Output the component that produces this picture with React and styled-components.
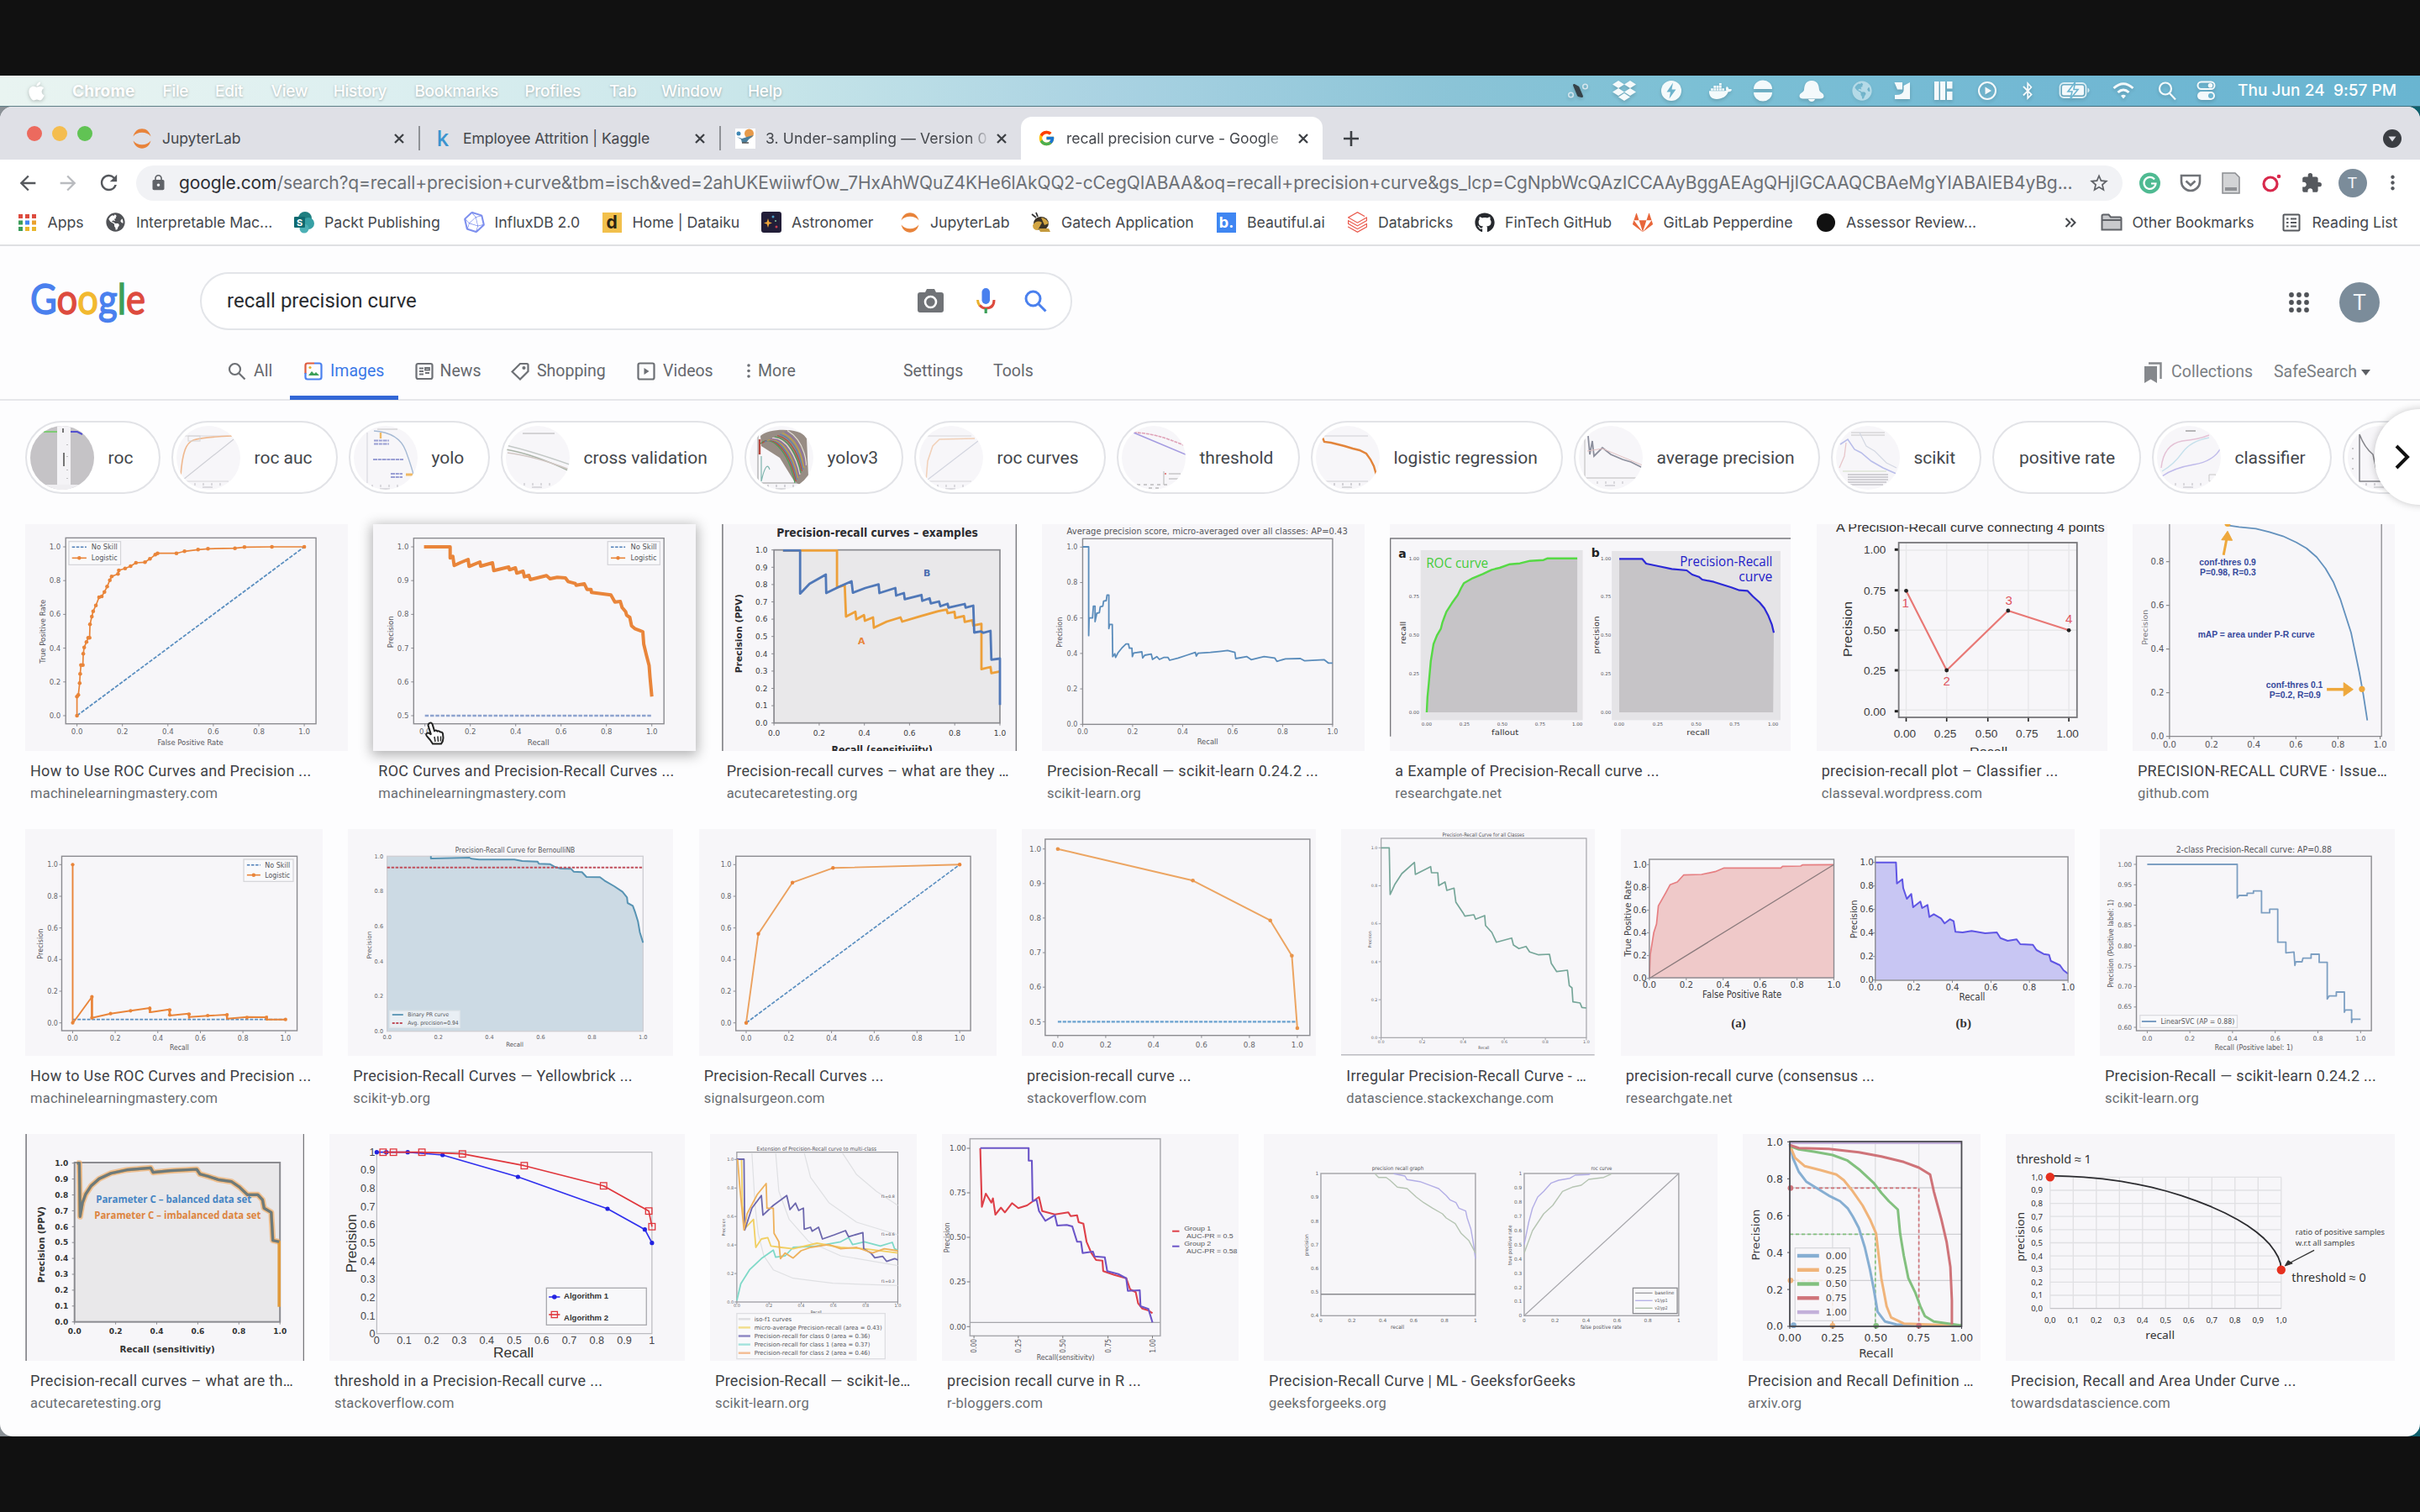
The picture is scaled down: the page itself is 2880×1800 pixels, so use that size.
import React, { createContext, useContext } from "react";
import styled, { createGlobalStyle } from "styled-components";
import { FaApple, FaDropbox, FaDocker, FaBluetoothB, FaGithub, FaGitlab, FaGlobeAmericas } from "react-icons/fa";
import { FcGoogle } from "react-icons/fc";
import { SiInfluxdb, SiDatabricks } from "react-icons/si";
import { MdLock, MdArrowBack, MdArrowForward, MdRefresh, MdStarBorder, MdMoreVert, MdExtension } from "react-icons/md";

const UI = `Inter, "Liberation Sans", sans-serif`;
const ROBOTO = `Roboto, "Liberation Sans", sans-serif`;
const PLOT = `"DejaVu Sans", sans-serif`;

const Global = createGlobalStyle`
  * { box-sizing: border-box; }
  html, body { margin: 0; padding: 0; background: #111; }
  body { width: 2880px; height: 1800px; overflow: hidden; }
  svg { display: block; flex: none; }
`;

/* ---------- shell ---------- */
const Screen = styled.div`
  width: 2880px; height: 1800px; background: #111; padding: 90px 0;
  display: flex; flex-direction: column; font-family: ${UI};
`;
const Desktop = styled.div`
  height: 1620px; display: flex; flex-direction: column;
  background: linear-gradient(90deg, #8b9196 0, #6b9aa8 50%, #0e5f6c 100%);
`;
const MenuBar = styled.div`
  height: 37px; flex: none; display: flex; align-items: center; padding: 0 28px 0 31px; color: #fff;
  border-bottom: 1px solid rgba(50, 90, 100, 0.75);
  background: linear-gradient(90deg, #e9f4f1 0, #dceff0 16%, #c7e5e9 32%, #a9d2e2 46%, #8bc4d7 60%, #7cc0d5 70%, #72b8d3 85%, #69b5d1 100%);
`;
const AppleSlot = styled.div` width: 55px; filter: drop-shadow(0 1px 2px rgba(0,0,0,.25)); `;
const MenuItem = styled.div`
  width: ${(p) => p.$w}px; font-size: 19px; letter-spacing: ${(p) => (p.$bold ? 0.15 : -0.3)}px; white-space: nowrap;
  font-weight: ${(p) => (p.$bold ? 700 : 500)}; text-shadow: 0 1px 3px rgba(0, 0, 0, 0.28);
`;
const StatusArea = styled.div` margin-left: auto; display: flex; align-items: center; `;
const StatusIcon = styled.div`
  width: ${(p) => p.$w || 26}px; margin-left: ${(p) => p.$m}px; display: flex; justify-content: center;
  opacity: ${(p) => p.$o || 0.92}; filter: drop-shadow(0 2px 2px rgba(0,0,0,.18));
`;
const Clock = styled.div`
  width: 190px; margin: -2px -1px 0 24px; font-size: 19px; font-weight: 500; letter-spacing: 0.06px; white-space: pre; 
`;
const Window = styled.div`
  flex: 1; min-height: 0; border-radius: 15px; overflow: hidden; background: #fdfdfe; display: flex; flex-direction: column;
`;

/* ---------- tab strip ---------- */
const TabStrip = styled.div` height: 63px; flex: none; background: #dfe0e6; display: flex; align-items: flex-end; `;
const Lights = styled.div` display: flex; gap: 12px; padding: 0 0 22px 31.5px; width: 143px; `;
const Light = styled.div` width: 18px; height: 18px; border-radius: 50%; background: ${(p) => p.$c}; `;
const Tab = styled.div`
  width: ${(p) => p.$w}px; height: 51px; display: flex; align-items: center; flex: none;
  padding: 0 ${(p) => p.$pr || 14}px 0 ${(p) => p.$pl || 14}px; color: #45484d; font-size: 17.6px;
  border-radius: ${(p) => (p.$active ? "13px 13px 0 0" : 0)}; background: ${(p) => (p.$active ? "#fff" : "transparent")};
`;
const TabIcon = styled.div` width: 24px; height: 24px; display: flex; align-items: center; justify-content: center; flex: none; margin-right: 12px; `;
const TabTitle = styled.div`
  flex: 1; min-width: 0; white-space: nowrap; letter-spacing: ${(p) => p.$ls ?? -0.1}px;
  ${(p) => p.$fade && `mask-image: linear-gradient(90deg, #000 ${p.$fade}px, rgba(0,0,0,.15) ${p.$fade + 22}px);`}
`;
const TabRule = styled.div` width: 2px; height: 29px; background: #8f9196; align-self: center; flex: none; margin-top: 12px; `;
const NewTab = styled.div` width: 68px; height: 51px; display: flex; align-items: center; justify-content: center; `;
const TabMenu = styled.div` margin: 0 22px 14px auto; `;

/* ---------- toolbar ---------- */
const Toolbar = styled.div` height: 55px; flex: none; display: flex; align-items: center; background: #fff; padding-left: 9px; `;
const NavButton = styled.div` width: 48px; display: flex; justify-content: center; color: ${(p) => p.$c || "#55585d"}; `;
const UrlBar = styled.div`
  width: 2364px; height: 42px; margin-left: 9px; border-radius: 21px; background: #f1f2f5; display: flex; align-items: center;
  padding: 0 15px 0 16px; color: #6c7075;
`;
const Url = styled.div`
  width: 2274px; margin-left: 14px; font-size: 21px; letter-spacing: -0.09px; white-space: nowrap;
  b { font-weight: 400; color: #2c2e33; }
`;
const Ext = styled.div` width: 48.2px; display: flex; justify-content: center; `;
const Extensions = styled.div` display: flex; align-items: center; margin-left: 8.5px; `;
const Avatar = styled.div`
  width: ${(p) => p.$d}px; height: ${(p) => p.$d}px; border-radius: 50%; background: #7b8c9a; color: #f3f6f8; flex: none;
  display: flex; align-items: center; justify-content: center; font: 400 ${(p) => p.$f}px ${ROBOTO};
`;
const Bookmarks = styled.div`
  height: 48px; flex: none; border-bottom: 2px solid #dfe0e3; background: #fff; display: flex; align-items: center;
  padding: 0 20px 7px 20px; font-size: 17.7px; color: #45484d; white-space: nowrap;
`;
const Bookmark = styled.div` width: ${(p) => p.$w}px; padding-left: ${(p) => p.$pl || 0}px; display: flex; align-items: center; letter-spacing: -0.04px; flex: none; `;
const BmIcon = styled.div` width: 24px; height: 24px; margin-right: 12.5px; display: flex; align-items: center; justify-content: center; flex: none; `;
const BmRule = styled.div` width: 2px; height: 24px; background: #d2d4d8; `;
const SquareIcon = styled.div`
  width: 23px; height: 24px; background: ${(p) => p.$bg}; color: ${(p) => p.$c}; border-radius: ${(p) => p.$r || 0}px;
  font: ${(p) => p.$wt || 700} ${(p) => p.$f || 20}px/23px ${UI}; text-align: center;
`;

/* ---------- google page ---------- */
const Page = styled.div` flex: 1; min-height: 0; display: flex; flex-direction: column; font-family: ${ROBOTO}; `;
const SearchRow = styled.div` height: 130px; flex: none; display: flex; align-items: center; padding: 0 48px 0 34px; `;
const Logo = styled.svg` overflow: visible; `;
const SearchBox = styled.div`
  width: 1038px; height: 69px; margin-left: 62px; border: 2px solid #e3e5e9; border-radius: 35px; background: #fff;
  display: flex; align-items: center; padding: 0 28px 0 30px; font-size: 24px; color: #2a2c30;
`;
const Query = styled.div` flex: 1; `;
const SearchIcons = styled.div` display: flex; align-items: center; & > svg + svg { margin-left: 33px; } & > svg + svg + svg { margin-left: 29px; } `;
const Account = styled.div` margin-left: auto; display: flex; align-items: center; gap: 36px; padding-top: 4px; `;
const NavRow = styled.div`
  height: 54px; flex: none; border-bottom: 2px solid #e6e7ea; display: flex; padding: 0 59px 0 256px;
  font-size: 19.5px; line-height: 38px; color: #66696e; white-space: nowrap;
`;
const NavTab = styled.div`
  width: ${(p) => p.$w}px; height: 53px; padding-left: ${(p) => p.$pl ?? 15}px; display: flex; gap: ${(p) => p.$g || 9}px;
  color: ${(p) => (p.$on ? "#3b78e7" : "inherit")}; border-bottom: ${(p) => (p.$on ? "5px solid #3367d6" : "0")};
  & > svg { margin-top: 8px; }
`;
const NavTools = styled.div` margin-left: auto; display: flex; color: #7b7f84; padding-top: 1px; & > svg { margin: 7px 10px 0 0; } `;
const SafeSearch = styled.div` margin-left: 25px; display: flex; align-items: center; gap: 5px; height: 38px; `;
const ChipRow = styled.div` height: 147px; flex: none; padding: 24px 0 0 30px; display: flex; position: relative; `;
const Chip = styled.div`
  width: ${(p) => p.$w}px; height: 87px; flex: none; margin-right: 13px; border: 2px solid #e2e3e7; border-radius: 44px; background: #fff;
  display: flex; align-items: center; font-size: 21px; color: #44474c; padding-left: ${(p) => (p.$plain ? 30 : 3.5)}px; white-space: nowrap;
`;
const ChipThumb = styled.div`
  width: 76px; height: 76px; border-radius: 50%; overflow: hidden; background: #f7f6f9; margin-right: 17px; flex: none;
  & > svg { opacity: ${(p) => (p.$strong ? 1 : 0.78)}; }
`;
const NextButton = styled.div`
  position: absolute; right: -54px; top: 10px; width: 108px; height: 114px; border-radius: 57px; background: #fff; box-shadow: 0 0 10px rgba(0, 0, 0, 0.22);
  display: flex; align-items: center; padding-left: 23px;
`;
const ResultRow = styled.div` height: 363px; flex: none; padding: 0 30px; display: flex; justify-content: space-between; `;
const Result = styled.div` width: ${(p) => p.$w}px; `;
const Thumb = styled.div`
  height: 270px; background: #f7f6f9; overflow: hidden; position: relative;
  box-shadow: ${(p) => (p.$hover ? "0 3px 14px 2px rgba(0,0,0,.3)" : "none")};
`;
const Title = styled.div` margin: 10px 0 0 6px; font-size: 18px; line-height: 27px; letter-spacing: 0.28px; color: #3f4246; white-space: nowrap; `;
const Source = styled.div` margin: 1.5px 0 0 6px; font-size: 16.5px; line-height: 24px; letter-spacing: 0.22px; color: #6a6d72; white-space: nowrap; `;
const Pointer = styled.svg` position: absolute; left: 59px; top: 235px; `;

/* ---------- plot primitives ----------
   Figures are described on a stretched artboard, three units per pixel
   vertically and 1568 units across the given width. */
const Board = createContext(null);
const board = (x, y, w) => ({ X: (v) => x + (v * w) / 1568, Y: (v) => y + v / 3, k: w / 1568 });
const useBoard = () => useContext(Board);
const conv = (b, d) => d.split(" ").map((p) => { const [x, y] = p.split(",").map(Number); return `${b.X(x).toFixed(1)},${b.Y(y).toFixed(1)}`; }).join(" ");

function L({ d, c = "#777", w = 1.3, dash, fill = "none", o }) {
  const b = useBoard();
  return <polyline points={conv(b, d)} fill={fill} stroke={c} strokeWidth={w} strokeDasharray={dash} strokeLinejoin="round" opacity={o} />;
}
function Dots({ d, r = 2, c, sq, fill }) {
  const b = useBoard();
  return conv(b, d).split(" ").map((p, i) => {
    const [x, y] = p.split(",").map(Number);
    return sq
      ? <rect key={i} x={x - r} y={y - r} width={r * 2} height={r * 2} fill={fill || "none"} stroke={c} strokeWidth="1.3" />
      : <circle key={i} cx={x} cy={y} r={r} fill={c} />;
  });
}
function R({ x, y, x2, y2, c = "#8b8b90", w = 1.3, fill = "none", o }) {
  const b = useBoard();
  return <rect x={b.X(x)} y={b.Y(y)} width={b.X(x2) - b.X(x)} height={b.Y(y2) - b.Y(y)} fill={fill} stroke={c} strokeWidth={w} opacity={o} />;
}
function T({ x, y, s = 9, to, a = "middle", c = "#55555a", b: bold, rot, len, f = PLOT, children }) {
  const bd = useBoard();
  const X = bd.X(x), Y = bd.Y(y);
  const fit = to != null ? (to - x) * bd.k : len;
  return (
    <text x={X} y={Y + s * 0.36} fontSize={s} fill={c} fontFamily={f} fontWeight={bold ? 700 : 400}
      textAnchor={to != null ? "start" : a} textLength={fit} lengthAdjust={fit ? "spacingAndGlyphs" : undefined}
      transform={rot ? `rotate(-90 ${X} ${Y})` : undefined}>{children}</text>
  );
}
const D6 = ["0.0", "0.2", "0.4", "0.6", "0.8", "1.0"];
const spread = (a, z, n) => Array.from({ length: n }, (_, i) => a + ((z - a) * i) / (n - 1));
function Axes({ box, xt, yt, xl = D6, yl = D6, xy, yx, s = 8.6, c = "#66666b", frame = "#8b8b90", fill, fw = 1.4, f = PLOT, bold, tick = true, rotX }) {
  const [x, y, x2, y2] = box;
  const b = useBoard();
  const xs = spread(xt[0], xt[1], xl.length), ys = spread(yt[0], yt[1], yl.length);
  const t = 3 / b.k;
  return (
    <g>
      <R x={x} y={y} x2={x2} y2={y2} c={frame} w={fw} fill={fill} />
      {xs.map((v, i) => <g key={i}>{tick && <L d={`${v},${y2} ${v},${y2 + 9}`} c={frame} w={1} />}<T x={v} y={xy} s={s} c={c} f={f} b={bold} rot={rotX}>{xl[i]}</T></g>)}
      {ys.map((v, i) => <g key={i}>{tick && <L d={`${x - t},${v} ${x},${v}`} c={frame} w={1} />}<T x={yx} y={v} s={s} c={c} f={f} b={bold} a="end">{yl[i]}</T></g>)}
    </g>
  );
}
function Figure({ on, x, y, w, children }) {
  return (
    <Board.Provider value={on}>
      <svg width={w} height="270" viewBox={`${x} ${y} ${w} 270`}>{children}</svg>
    </Board.Provider>
  );
}

const BLUE = "#5b8fc0", ORANGE = "#e9853a";
const B1 = board(0, 600, 840), B2 = board(840, 600, 800), B3 = board(1620, 600, 1260);
const B4 = board(0, 970, 1200), B5 = board(1200, 970, 1680);
const B6 = board(0, 1335, 1480), B7 = board(1480, 1335, 1400);

function SkillLegend({ x, y, x2, y2, lx, tx, te, rows, s = 8.4 }) {
  return (
    <g>
      <R x={x} y={y} x2={x2} y2={y2} c="#d4d4d8" w={1.2} fill="#f9f9fb" />
      <L d={`${lx[0]},${rows[0]} ${lx[1]},${rows[0]}`} c="#4f7fb8" w={1.6} dash="3.5 1.6" />
      <L d={`${lx[0]},${rows[1]} ${lx[1]},${rows[1]}`} c={ORANGE} w={1.6} />
      <Dots d={`${(lx[0] + lx[1]) / 2},${rows[1]}`} c={ORANGE} r={2.2} />
      <T x={tx} y={rows[0]} to={te} s={s}>No Skill</T>
      <T x={tx} y={rows[1]} to={te} s={s}>Logistic</T>
    </g>
  );
}

const rocLine = "171,756 171,688 174,682 177,640 178,607 180,575 184,575 185,535 187,512 192,493 196,478 199,478 200,430 204,402 207,383 213,362 220,333 226,330 232,314 238,295 244,272 248,259 262,250 264,237 278,230 290,222 302,210 322,208 333,196 345,181 350,176 392,176 410,169 440,163 462,160 522,158 543,154 604,153 676,153";
const prLine = "942,153 1000,153 1000,193 1006,187 1009,220 1022,210 1040,198 1042,223 1066,207 1068,222 1094,210 1097,238 1130,225 1132,235 1145,228 1148,247 1162,240 1165,260 1175,255 1178,270 1214,256 1222,267 1238,262 1256,264 1262,277 1278,284 1280,290 1298,285 1304,305 1313,305 1314,316 1357,325 1366,350 1378,348 1382,370 1390,385 1392,397 1399,405 1403,435 1410,445 1428,456 1430,500 1436,540 1442,577 1444,620 1448,688";

const FigRoc = () => (
  <Figure on={B1} x={30} y={624} w={384}>
    <Axes box={[146, 121, 702, 785]} xt={[171, 676]} yt={[756, 153]} xy={814} yx={135} />
    <L d="171,756 676,153" c={BLUE} w={1.8} dash="4.5 1.8" />
    <L d={rocLine} c={ORANGE} w={1.7} />
    <Dots d={rocLine} c={ORANGE} r={2.3} />
    <SkillLegend x={153} y={134} x2={268} y2={217} lx={[160, 192]} tx={203} te={261} rows={[154, 193]} />
    <T x={350} y={850} to={496}>False Positive Rate</T>
    <T x={94} y={455} rot len={76}>True Positive Rate</T>
  </Figure>
);
const FigPr = () => (
  <Figure on={B1} x={444} y={624} w={384}>
    <Axes box={[919, 122, 1475, 785]} xt={[944, 1448]} yt={[756, 153]} yl={["0.5", "0.6", "0.7", "0.8", "0.9", "1.0"]} xy={814} yx={908} />
    <L d="944,756 1448,756" c="#8ea3cf" w={2.4} dash="4.5 1.8" />
    <L d={prLine} c={ORANGE} w={4} />
    <SkillLegend x={1350} y={134} x2={1466} y2={217} lx={[1357, 1389]} tx={1401} te={1459} rows={[154, 193]} />
    <T x={1172} y={850} to={1220}>Recall</T>
    <T x={868} y={457} rot len={38}>Precision</T>
  </Figure>
);
const TENTHS = ["0.0", "0.1", "0.2", "0.3", "0.4", "0.5", "0.6", "0.7", "0.8", "0.9", "1.0"];
const FigExamples = () => (
  <Figure on={B2} x={858} y={624} w={351}>
    <L d="37,60 37,900" c="#77777c" w={1.5} /><L d="722,60 722,900" c="#77777c" w={1.5} />
    <T x={163} y={101} to={633} s={13.5} b c="#2c2c30">Precision-recall curves – examples</T>
    <Axes box={[157, 164, 684, 782]} xt={[157, 684]} yt={[782, 164]} yl={TENTHS} xy={817} yx={142} s={9} c="#3c3c40" fill="#e9e8ea" fw={1.7} />
    <L d="178,166 304,166 304,298 322,290 325,402 347,385 349,412 367,397 369,417 388,405 390,442 420,420 452,405 456,420 500,400 540,383 560,377 562,390 578,385 580,407 600,400 602,421 620,415 622,434 641,428 641,590 662,582 664,604 684,598" c="#eda03a" w={2.8} />
    <L d="178,166 218,166 218,320 240,285 278,252 279,318 310,295 338,276 341,317 370,300 401,287 403,318 440,300 442,327 460,318 462,340 501,325 503,346 520,337 523,355 542,348 545,365 562,356 564,370 602,357 604,370 622,363 624,459 640,455 645,460 662,453 664,556 684,552 684,718" c="#5078b8" w={2.8} />
    <T x={514} y={246} s={11} b c="#4a6db0">B</T>
    <T x={361} y={490} s={11} b c="#e8843a">A</T>
    <T x={291} y={878} to={527} s={11.5} b c="#2c2c30">Recall (sensitiviity)</T>
    <T x={75} y={463} rot len={94} s={10.5} b c="#2c2c30">Precision (PPV)</T>
  </Figure>
);
const FigAverage = () => (
  <Figure on={B2} x={1239} y={624} w={384}>
    <T x={840} y={97} to={1495} s={9.8}>Average precision score, micro-averaged over all classes: AP=0.43</T>
    <Axes box={[877, 124, 1460, 787]} xt={[877, 1460]} yt={[787, 154]} xy={814} yx={865} s={8} />
    <L d="877,153 891,153 891,470 892,407 900,407 902,365 906,365 906,420 910,390 916,388 918,367 924,365 926,347 932,345 934,325 938,325 938,445 940,430 946,430 947,545 952,535 954,548 960,530 968,515 978,500 984,500 986,515 992,515 993,545 996,532 1015,528 1017,550 1022,540 1037,536 1040,555 1050,545 1056,555 1066,548 1076,548 1080,558 1100,550 1120,540 1140,530 1142,543 1146,533 1175,530 1200,526 1215,523 1232,530 1234,552 1260,545 1270,556 1300,545 1325,550 1330,562 1350,553 1385,552 1395,560 1440,556 1450,568 1460,568" c="#5a8cbb" w={1.8} />
    <T x={1144} y={849} to={1193} s={8.6}>Recall</T>
    <T x={823} y={458} rot len={36}>Precision</T>
  </Figure>
);
const Q5 = ["0.00", "0.25", "0.50", "0.75", "1.00"];
const FigTwoPanel = () => (
  <Figure on={B3} x={1654} y={624} w={477}>
    <L d="43,830 43,123 640,123" c="#77777b" w={1.5} />
    <R x={88} y={165} x2={328} y2={772} c="none" fill="#e5e4e7" />
    <R x={371} y={168} x2={621} y2={772} c="none" fill="#e5e4e7" />
    <L d="97,744 98,690 100,640 103,560 107,500 112,470 118,445 120,425 123,405 126,385 134,355 143,325 148,300 152,283 165,265 180,250 193,235 205,228 220,215 235,212 250,203 270,200 276,194 320,194 320,744" c="none" fill="#c6c4c7" />
    <L d="382,196 416,196 422,213 440,222 460,232 482,237 490,252 500,260 505,270 522,278 535,288 548,298 560,308 572,310 580,330 590,352 597,372 603,400 608,430 611,460 610,744 382,744" c="none" fill="#c6c4c7" />
    <L d="97,744 98,690 100,640 103,560 107,500 112,470 118,445 120,425 123,405 126,385 134,355 143,325 148,300 152,283 165,265 180,250 193,235 205,228 220,215 235,212 250,203 270,200 276,194 320,194" c="#56d945" w={2.4} />
    <L d="382,196 416,196 422,213 440,222 460,232 482,237 490,252 500,260 505,270 522,278 535,288 548,298 560,308 572,310 580,330 590,352 597,372 603,400 608,430 611,460" c="#2c29d6" w={2.2} />
    <T x={61} y={177} s={14} b c="#222">a</T><T x={347} y={175} s={14} b c="#222">b</T>
    <T x={96} y={211} to={188} s={15.5} c="#46cc3c" f={'"Open Sans", sans-serif'}>ROC curve</T>
    <T x={472} y={205} to={609} s={15.5} c="#2320c8" f={'"Open Sans", sans-serif'}>Precision-Recall</T>
    <T x={559} y={260} to={609} s={15.5} c="#2320c8" f={'"Open Sans", sans-serif'}>curve</T>
    {[97, 153, 209, 265, 320].map((x, i) => <T key={i} x={x} y={785} s={5.5}>{Q5[i]}</T>)}
    {[382, 439, 496, 553, 610].map((x, i) => <T key={i} x={x} y={785} s={5.5}>{Q5[i]}</T>)}
    {[744, 606, 469, 331, 194].map((y, i) => <T key={i} x={86} y={y} s={5.5} a="end">{Q5[i]}</T>)}
    {[744, 606, 469, 331, 196].map((y, i) => <T key={i} x={370} y={y} s={5.5} a="end">{Q5[i]}</T>)}
    <T x={193} y={816} to={233} s={9.5} c="#333">fallout</T><T x={482} y={816} to={516} s={9.5} c="#333">recall</T>
    <T x={62} y={460} rot len={27} s={9} c="#333">recall</T><T x={348} y={468} rot len={45} s={9.5} c="#333">precision</T>
  </Figure>
);
const SANS = `"Liberation Sans", sans-serif`;
const FigFourPoints = () => (
  <Figure on={B3} x={2162} y={624} w={346}>
    <T x={703} y={82} to={1101} s={15.5} c="#333" f={SANS}>A Precision-Recall curve connecting 4 points</T>
    {[807, 867, 928, 988, 1048].map((v) => <L key={v} d={`${v},138 ${v},762`} c="#e8e8ea" w={1.4} />)}
    {[165, 309, 451, 594, 736].map((v) => <L key={v} d={`796,${v} 1060,${v}`} c="#e8e8ea" w={1.4} />)}
    <R x={796} y={138} x2={1060} y2={762} c="#77777b" w={1.8} />
    {[807, 867, 928, 988, 1048].map((v, i) => <g key={v}><L d={`${v},764 ${v},777`} c="#222" w={1.6} /><T x={v - 2} y={820} s={13.6} c="#3c3c40" f={SANS}>{Q5[i]}</T></g>)}
    {[740, 594, 451, 308, 163].map((v, i) => <g key={v}><L d={`790,${v} 795,${v}`} c="#222" w={3} /><T x={777} y={v} s={13.6} a="end" c="#3c3c40" f={SANS}>{Q5[i]}</T></g>)}
    <L d="807,310 867,594 958,381 1048,451" c="#e87875" w={2.2} />
    <Dots d="807,310 867,594 958,381 1048,451" c="#222" r={2.4} />
    <T x={806} y={352} s={15} c="#df5560" f={SANS}>1</T><T x={867} y={631} s={15} c="#df5560" f={SANS}>2</T>
    <T x={959} y={345} s={15} c="#df5560" f={SANS}>3</T><T x={1048} y={411} s={15} c="#df5560" f={SANS}>4</T>
    <T x={720} y={447} rot len={66} s={15.5} c="#333" f={SANS}>Precision</T>
    <T x={901} y={884} to={957} s={14.5} c="#333" f={SANS}>Recall</T>
  </Figure>
);
const NAVY = "#36499c", AMBER = "#eea83c";
const FigConf = () => (
  <Figure on={B3} x={2538} y={624} w={312}>
    <L d="1197,60 1197,830 1511,830 1511,60" c="#8b8b90" w={1.3} />
    {spread(1197, 1509, 6).map((v, i) => <g key={i}><L d={`${v},830 ${v},840`} w={1} /><T x={v} y={859} s={10}>{D6[i]}</T></g>)}
    {spread(830, 206, 5).map((v, i) => <g key={i}><L d={`1192,${v} 1197,${v}`} w={1} /><T x={1189} y={v} s={10} a="end">{D6[i]}</T></g>)}
    <L d="1283,76 1300,82 1325,88 1345,100 1365,115 1385,137 1400,158 1415,190 1428,230 1440,280 1450,340 1458,400 1466,460 1472,530 1478,600 1484,680 1490,773" c="#6391bd" w={1.8} />
    <Dots d="1283,70 1482,661" c={AMBER} r={3.6} />
    <L d="1277,182 1282,120" c={AMBER} w={3} /><L d="1274,128 1283,97 1290,130 1274,128" c={AMBER} w={1} fill={AMBER} />
    <L d="1430,662 1460,662" c={AMBER} w={3.5} /><L d="1455,638 1469,662 1455,686 1455,638" c={AMBER} w={1} fill={AMBER} />
    <T x={1241} y={208} to={1325} s={10} b c={NAVY} f={SANS}>conf-thres 0.9</T>
    <T x={1242} y={245} to={1325} s={10} b c={NAVY} f={SANS}>P=0.98, R=0.3</T>
    <T x={1239} y={466} to={1412} s={10} b c={NAVY} f={SANS}>mAP = area under P-R curve</T>
    <T x={1340} y={645} to={1424} s={10} b c={NAVY} f={SANS}>conf-thres 0.1</T>
    <T x={1345} y={682} to={1421} s={10} b c={NAVY} f={SANS}>P=0.2, R=0.9</T>
    <T x={1160} y={440} rot len={42} s={9.5} c="#77777b">Precision</T>
  </Figure>
);
const FigSpike = () => (
  <Figure on={B4} x={30} y={987} w={354}>
    <Axes box={[96, 148, 462, 771]} xt={[113, 444]} yt={[743, 178]} xy={798} yx={90} s={8} />
    <L d="113,731 444,731" c={BLUE} w={1.8} dash="4 1.7" />
    <L d="113,178 113,745 143,650 143,725 172,710 203,700 233,690 234,705 263,695 264,717 293,710 294,722 323,718 352,714 353,728 384,722 414,723 415,731 444,731" c={ORANGE} w={1.9} />
    <Dots d="113,178 113,743 143,650 143,725 172,710 203,700 233,692 264,697 264,715 294,712 323,717 353,714 384,724 414,724 444,731" c={ORANGE} r={2.1} />
    <L d="143,645 143,730" c={ORANGE} w={2.6} /><L d="233,685 233,708" c={ORANGE} w={2.4} /><L d="264,693 264,718" c={ORANGE} w={2.4} /><L d="294,708 294,728" c={ORANGE} w={2.4} /><L d="353,710 353,730" c={ORANGE} w={2.4} /><L d="415,718 415,735" c={ORANGE} w={2.4} />
    <SkillLegend x={379} y={159} x2={456} y2={238} lx={[384, 405]} tx={412} te={451} rows={[179, 215]} s={8} />
    <T x={264} y={831} to={294} s={8.3}>Recall</T>
    <T x={63} y={461} rot len={36} s={8.4}>Precision</T>
  </Figure>
);
const ybLine = "670,148 670,156 730,153 733,157 745,160 800,160 812,165 836,167 838,175 855,176 862,185 872,192 888,193 892,203 905,205 912,222 933,223 940,235 955,255 968,275 975,295 976,315 984,325 988,350 992,380 995,420 1000,457";
const FigYellowbrick = () => (
  <Figure on={B4} x={414} y={987} w={387}>
    <L d={`602,773 602,148 ${ybLine} 1000,773`} c="none" fill="#ccdae4" />
    <Axes box={[602, 148, 1000, 773]} xt={[602, 1000]} yt={[773, 148]} xy={793} yx={596} s={6.6} frame="#cfcfd4" tick={false} />
    <L d={ybLine} c="#5793b3" w={2} />
    <L d="602,188 1000,188" c="#c0505c" w={1.9} dash="3.4 1.6" />
    <T x={708} y={127} to={894} s={8}>Precision-Recall Curve for BernoulliNB</T>
    <R x={606} y={700} x2={715} y2={760} c="#dfe5ea" fill="#e9eff4" />
    <L d="610,714 627,714" c="#5793b3" w={1.8} /><L d="610,744 627,744" c="#c0505c" w={1.8} dash="3 1.5" />
    <T x={634} y={714} to={698} s={6.6}>Binary PR curve</T>
    <T x={634} y={744} to={713} s={6.6}>Avg. precision=0.94</T>
    <T x={787} y={821} to={814} s={7.4}>Recall</T>
    <T x={574} y={465} rot len={33} s={7.4}>Precision</T>
  </Figure>
);
const FigSurgeon = () => (
  <Figure on={B4} x={831} y={987} w={354}>
    <Axes box={[1143, 148, 1508, 771]} xt={[1159, 1491]} yt={[743, 178]} xy={799} yx={1136} s={8} />
    <L d="1159,743 1491,178" c={BLUE} w={1.7} dash="4.5 1.8" />
    <L d="1159,743 1178,425 1231,242 1294,190 1491,178" c="#eba15f" w={1.9} />
    <Dots d="1159,743 1178,425 1231,242 1294,190 1491,178" c={ORANGE} r={2.2} />
  </Figure>
);
const FigOverflow = () => (
  <Figure on={B5} x={1215} y={987} w={350}>
    <Axes box={[40, 87, 334, 788]} xt={[54, 320]} yt={[739, 122]} yl={["0.5", "0.6", "0.7", "0.8", "0.9", "1.0"]} xy={822} yx={35.5} s={8.8} />
    <L d="54,739 320,739" c="#6ba2cf" w={2.3} dash="4.2 1.6" />
    <L d="54,122 204,235 290,377 314,503 320,762" c="#eca562" w={2} />
    <Dots d="54,122 204,235 290,377 314,503 320,762" c="#e8944a" r={2.3} />
  </Figure>
);
const FigIrregular = () => (
  <Figure on={B5} x={1597} y={987} w={302}>
    <T x={483} y={71} to={574} s={6.4}>Precision-Recall Curve for all Classes</T>
    <Axes box={[415, 84, 643, 796]} xt={[415, 643]} yt={[796, 118]} xy={812} yx={411} s={4.8} frame="#a5a5aa" fw={1.2} />
    <L d="415,118 424,118 425,285 430,250 438,210 452,170 453,213 470,185 471,207 478,207 479,253 486,240 488,270 496,262 498,312 506,350 508,362 518,357 520,373 530,360 531,395 538,420 543,455 560,440 562,465 568,478 576,470 580,490 590,500 602,498 604,530 610,560 622,555 624,610 627,618 628,668 636,672 638,688 643,690" c="#76a699" w={1.7} />
    <L d="370,857 652,857" c="#bdbdc2" w={1.6} />
    <T x={523} y={831} to={535} s={5}>Recall</T><T x={402} y={445} rot len={20} s={5}>Precision</T>
  </Figure>
);
const redArea = "712,584 713,500 717,420 720,390 722,325 730,280 735,250 743,240 750,215 770,213 785,203 795,190 858,190 860,184 880,183 882,179 917,178";
const blueArea = "963,170 986,170 987,245 993,230 994,262 998,300 1003,283 1005,330 1013,310 1015,333 1021,322 1023,365 1028,355 1036,370 1040,388 1046,373 1050,380 1052,418 1060,420 1070,415 1085,423 1098,420 1102,440 1110,450 1120,445 1124,462 1138,464 1142,483 1150,497 1156,500 1158,522 1168,537 1172,555 1177,568";
const SERIF = `"Liberation Serif", serif`;
const FigConsensus = () => (
  <Figure on={B5} x={1929} y={987} w={540}>
    <L d={`${redArea} 917,584`} c="none" fill="#efc9c9" />
    <L d={redArea} c="#e67f82" w={1.7} /><L d="712,584 917,178" c="#8a7a7c" w={1.3} />
    <Axes box={[712, 159, 917, 582]} xt={[712, 917]} yt={[584, 178]} xy={607} yx={709} s={10.2} c="#444448" />
    <L d={`${blueArea} 1177,590 963,590`} c="none" fill="#c8c6f3" />
    <L d={blueArea} c="#5f55e4" w={2} />
    <Axes box={[963, 150, 1177, 591]} xt={[963, 1177]} yt={[590, 170]} xy={615} yx={961} s={10.2} c="#444448" />
    <T x={771} y={641} to={859} s={11.5} c="#3c3c40">False Positive Rate</T>
    <T x={1056} y={652} to={1085} s={11.5} c="#3c3c40">Recall</T>
    <T x={688} y={370} rot len={91} s={11} c="#3c3c40">True Positive Rate</T>
    <T x={939} y={373} rot len={46} s={11} c="#3c3c40">Precision</T>
    <T x={811} y={742} s={15} b c="#333" f={SERIF}>(a)</T><T x={1061} y={742} s={15} b c="#333" f={SERIF}>(b)</T>
  </Figure>
);
const FigTwoClass = () => (
  <Figure on={B5} x={2499} y={987} w={351}>
    <T x={1297} y={125} to={1470} s={9.8}>2-class Precision-Recall curve: AP=0.88</T>
    <Axes box={[1253, 148, 1514, 771]} xt={[1265, 1502]} yt={[759, 177]} xy={798} yx={1248} s={7.6}
      yl={["0.60", "0.65", "0.70", "0.75", "0.80", "0.85", "0.90", "0.95", "1.00"]} />
    <L d="1265,177 1365,177 1365,297 1367,288 1376,288 1376,280 1383,280 1383,272 1392,272 1392,350 1401,350 1401,337 1410,337 1410,455 1419,455 1419,493 1428,490 1429,538 1430,525 1437,525 1438,512 1447,512 1447,498 1456,498 1456,527 1465,527 1465,658 1467,647 1475,647 1475,633 1484,633 1484,705 1485,697 1492,697 1492,742 1493,730 1502,730" c="#7d9fc2" w={1.8} />
    <R x={1257} y={716} x2={1365} y2={760} c="#dcdce0" fill="#f9f9fb" />
    <L d="1259,738 1275,738" c="#6c94bd" w={1.8} /><T x={1280} y={738} to={1362} s={8}>LinearSVC (AP = 0.88)</T>
    <T x={1340} y={832} to={1427} s={8.2}>Recall (Positive label: 1)</T>
    <T x={1225} y={460} rot len={105} s={8}>Precision (Positive label: 1)</T>
  </Figure>
);
const paramC = "97,149 100,149 101,340 104,290 108,260 115,230 125,205 140,185 160,173 190,166 193,182 215,176 248,171 252,188 262,196 275,208 292,215 302,235 312,262 325,262 331,280 333,310 342,325 344,425 352,430";
const FigParameterC = () => (
  <Figure on={B6} x={30} y={1350} w={332}>
    <L d="33,30 33,870" c="#77777c" w={1.5} /><L d="383,30 383,870" c="#77777c" w={1.5} />
    <Axes box={[94, 147, 353, 716]} xt={[94, 353]} yt={[716, 149]} yl={TENTHS} xy={750} yx={86} s={9} c="#333" fill="#e9e8ea" fw={2} bold />
    <L d={paramC} c="#f0b070" w={7} o={0.7} />
    <L d={`${paramC} 352,662`} c="#e09a3c" w={3.6} />
    <L d={paramC} c="#6c7a7c" w={3.2} />
    <T x={121} y={279} to={317} s={12} b c="#4585c4" f={'"Open Sans", sans-serif'}>Parameter C – balanced data set</T>
    <T x={119} y={335} to={329} s={12} b c="#dd8540" f={'"Open Sans", sans-serif'}>Parameter C – imbalanced data set</T>
    <T x={151} y={813} to={271} s={11} b c="#333">Recall (sensitivitiy)</T>
    <T x={52} y={440} rot len={91} s={10} b c="#333">Precision (PPV)</T>
  </Figure>
);
const FigThreshold = () => (
  <Figure on={B6} x={392} y={1350} w={423}>
    <Axes box={[475, 110, 822, 758]} xt={[475, 822]} yt={[758, 108]} xy={781} yx={473} s={12.6} f={SANS} c="#444448" frame="#b5b5ba" fw={1.1} tick={false}
      xl={["0", "0.1", "0.2", "0.3", "0.4", "0.5", "0.6", "0.7", "0.8", "0.9", "1"]} yl={["0", "0.1", "0.2", "0.3", "0.4", "0.5", "0.6", "0.7", "0.8", "0.9", "1"]} />
    <L d="475,110 514,110 558,120 653,198 766,312 813,386 822,434" c="#3030ee" w={1.7} />
    <Dots d="475,110 487,110 514,110 558,120 653,198 766,312 813,386 822,434" c="#2222e0" r={2.6} />
    <L d="483,110 496,110 532,110 583,116 661,158 761,230 818,320 822,376" c="#e0363c" w={1.7} />
    <Dots d="483,110 496,110 532,110 583,116 661,158 761,230 818,320 822,376" c="#e0363c" r={3.8} sq />
    <R x={689} y={595} x2={815} y2={727} c="#a9a9ae" fill="#f8f8fa" />
    <L d="692,627 706,627" c="#3030ee" w={1.6} /><Dots d="699,627" c="#2222e0" r={2.8} />
    <L d="692,690 706,690" c="#e0363c" w={1.6} /><Dots d="699,690" c="#e0363c" r={3.6} sq />
    <T x={711} y={624} to={767} s={9.5} b c="#333" f={SANS}>Algorithm 1</T><T x={711} y={702} to={767} s={9.5} b c="#333" f={SANS}>Algorithm 2</T>
    <T x={622} y={825} to={673} s={17} c="#333" f={SANS}>Recall</T>
    <T x={443} y={436} rot len={70} s={17} c="#333" f={SANS}>Precision</T>
  </Figure>
);
const FigMultiClass = () => (
  <Figure on={B6} x={845} y={1350} w={246}>
    <T x={954} y={97} to={1105} s={6.6}>Extension of Precision-Recall curve to multi-class</T>
    <Axes box={[929, 110, 1132, 645]} xt={[929, 1132]} yt={[645, 136]} xy={659} yx={925} s={5} frame="#96969b" fw={1.2} />
    {["948,112 952,300 956,400 963,480 975,530 1000,560 1050,578 1132,586", "978,112 982,250 995,350 1020,430 1060,480 1132,515", "1014,112 1022,200 1045,290 1080,360 1132,405", "1062,112 1080,190 1105,250 1132,300"].map((d) => <L key={d} d={d} c="#dfe0e3" w={1.2} />)}
    <L d="929,640 934,580 945,530 960,490 975,460 978,485 990,480 1000,450 1030,445 1060,430 1070,415 1075,440 1090,430 1110,445 1125,432 1128,455 1132,460" c="#7fd9c8" w={1.8} />
    <L d="935,135 936,300 940,380 950,350 953,450 960,420 968,415 972,445 985,450 1000,455 1030,435 1060,450 1090,455 1132,470" c="#f1cf62" w={1.8} />
    <L d="929,135 938,135 939,388 948,310 960,265 962,335 975,300 992,265 996,315 1003,292 1007,318 1013,310 1014,385 1022,378 1024,392 1032,378 1037,420 1052,405 1066,390 1070,412 1088,397 1089,455 1098,470 1103,487 1113,482 1118,500 1128,490 1132,495" c="#6c67ad" w={1.8} />
    <L d="930,135 933,240 938,388 942,330 955,260 966,222 967,310 975,310 976,400 982,430 984,490 990,470 1000,488 1010,462 1022,450 1045,440 1060,455 1080,450 1100,470 1115,455 1132,462" c="#eeb15c" w={1.8} />
    {[["f1=0.8", 268], ["f1=0.6", 403], ["f1=0.2", 571]].map(([t, y]) => <T key={t} x={1111} y={y} to={1128} s={4.6}>{t}</T>)}
    <T x={1022} y={680} to={1036} s={5.2}>Recall</T><T x={912} y={378} rot len={21} s={5}>Precision</T>
    <R x={929} y={686} x2={1116} y2={848} c="#dedee2" fill="#f9f9fb" />
    {[["iso-f1 curves", 998, "#dddde0"], ["micro-average Precision-recall (area = 0.43)", 1112, "#f1dd8a"], ["Precision-recall for class 0 (area = 0.36)", 1097, "#8c86c2"], ["Precision-recall for class 1 (area = 0.37)", 1097, "#a2e2dc"], ["Precision-recall for class 2 (area = 0.46)", 1097, "#f3bc92"]].map(([t, e, c], i) => (
      <g key={t}><L d={`931,${706 + i * 30.3} 946,${706 + i * 30.3}`} c={c} w={2.4} /><T x={951} y={706 + i * 30.3} to={e} s={7}>{t}</T></g>
    ))}
  </Figure>
);
const FigR = () => (
  <Figure on={B6} x={1121} y={1350} w={353}>
    <R x={1223} y={62} x2={1463} y2={766} c="#aaaaaf" w={1.5} /><L d="1223,718 1463,718" c="#a5a5aa" w={1.3} />
    {[733, 573, 414, 255, 96].map((v, i) => <g key={v}><L d={`1219,${v} 1223,${v}`} w={1} /><T x={1218} y={v} s={8.8} a="end">{Q5[i]}</T></g>)}
    {[1228, 1284, 1340, 1397, 1453].map((v, i) => <g key={v}><L d={`${v},766 ${v},775`} w={1} /><T x={v} y={802} s={8.6} rot len={17}>{Q5[i]}</T></g>)}
    <L d="1236,96 1238,305 1243,258 1250,290 1252,275 1255,333 1262,308 1267,325 1276,292 1284,310 1295,300 1310,270 1314,320 1330,332 1347,325 1350,338 1358,335 1360,360 1366,365 1370,430 1376,470 1382,495 1390,497 1391,535 1405,548 1420,560 1425,600 1432,610 1435,650 1440,668 1448,675 1453,685" c="#de4049" w={2.1} />
    <L d="1236,95 1297,95 1297,140 1301,140 1302,285 1307,280 1310,320 1318,355 1330,335 1333,372 1345,370 1352,375 1358,430 1363,430 1365,470 1378,465 1380,482 1393,485 1396,535 1410,545 1420,560 1422,605 1437,603 1438,660 1448,670 1453,718" c="#6b55c8" w={2.1} />
    <T x={1307} y={843} to={1380} s={9}>Recall(sensitivity)</T><T x={1194} y={415} rot len={36} s={8.6}>Precision</T>
    <L d="1478,392 1487,392" c="#de4049" w={2} /><L d="1478,446 1487,446" c="#6b55c8" w={2} />
    <T x={1493} y={380} to={1527} s={8} f={SANS}>Group 1</T><T x={1496} y={407} to={1555} s={8} f={SANS}>AUC-PR = 0.5</T>
    <T x={1493} y={434} to={1527} s={8} f={SANS}>Group 2</T><T x={1496} y={463} to={1560} s={8} f={SANS}>AUC-PR = 0.58</T>
  </Figure>
);
const FigGeeks = () => (
  <Figure on={B7} x={1504} y={1350} w={540}>
    <Axes box={[103, 186, 309, 694]} xt={[103, 309]} yt={[694, 186]} xy={710} yx={100} s={5.8} frame="#a3a3a8" xl={["0", "0.2", "0.4", "0.6", "0.8", "1"]} yl={["0.4", "0.5", "0.6", "0.7", "0.8", "0.9", "1"]} tick={false} />
    <L d="103,617 309,617" c="#8a8a8f" w={1.4} />
    <L d="200,187 215,195 218,208 235,215 250,230 260,240 270,265 275,280 283,290 287,310 296,320 298,345 303,385 306,430 309,490" c="#b3aee6" w={1.4} />
    <L d="175,187 180,200 190,200 195,210 205,235 218,240 230,270 240,290 252,310 265,330 270,345 282,365 290,400 300,425 309,470" c="#b6c5b3" w={1.4} />
    <Axes box={[374, 186, 580, 694]} xt={[374, 580]} yt={[694, 186]} xy={710} yx={371} s={5.8} frame="#a3a3a8" xl={["0", "0.2", "0.4", "0.6", "0.8", "1"]} yl={["0", "0.1", "0.2", "0.3", "0.4", "0.5", "0.6", "0.7", "0.8", "0.9", "1"]} tick={false} />
    <L d="374,694 580,186" c="#a6a6ab" w={1.2} />
    <L d="374,440 380,360 385,310 392,270 400,250 410,220 420,210 435,203 442,192 460,190 462,187" c="#b3aee6" w={1.4} />
    <L d="374,470 385,390 400,330 412,300 425,250 438,235 450,228 460,207 480,200 490,188" c="#b6c5b3" w={1.4} />
    <R x={519} y={595} x2={578} y2={686} c="#8b8b90" fill="#f9f9fb" />
    {[["baseline", "#9a9a9f"], ["v1/yp1", "#b3aee6"], ["v2/yp2", "#a9bba6"]].map(([t, c], i) => <g key={t}><L d={`522,${613 + i * 27} 545,${613 + i * 27}`} c={c} /><T x={548} y={613 + i * 27} s={5.6} to={i ? 565 : 574}>{t}</T></g>)}
    <T x={171} y={166} to={240} s={6.4}>precision recall graph</T><T x={463} y={166} to={491} s={6.4}>roc curve</T>
    <T x={196} y={735} to={214} s={6.4}>recall</T><T x={449} y={735} to={504} s={6.4}>false positive rate</T>
    <T x={84} y={442} rot len={26} s={6}>precision</T><T x={355} y={442} rot len={48} s={6}>true positive rate</T>
  </Figure>
);
const FigDefinition = () => {
  const B = "#86aed2", O = "#f0b47a", G = "#82c07e", P = "#cf7379";
  return (
    <Figure on={B7} x={2074} y={1350} w={283}>
      {[785, 842, 900].map((v) => <L key={v} d={`${v},72 ${v},732`} c="#dddde0" />)}
      {[237, 403, 568].map((v) => <L key={v} d={`728,${v} 957,${v}`} c="#cfcfd3" />)}
      <L d="728,77 957,77" c="#c3b0da" w={2.4} />
      <L d="728,238 900,238 900,732" c={P} w={1.7} dash="4 3" /><L d="728,403 842,403 842,732" c={G} w={1.7} dash="4 3" /><L d="728,568 785,568 785,732" c={O} w={1.7} dash="4 3" />
      <L d="728,80 732,130 740,180 750,215 765,240 780,265 795,285 805,310 812,340 820,380 828,450 835,530 840,600 845,680 855,715 870,725 900,728 957,731" c={B} w={3} />
      <L d="728,85 735,130 748,160 770,175 790,190 800,210 812,250 825,300 835,350 843,400 846,470 850,560 857,660 863,700 880,722 957,730" c={O} w={3} />
      <L d="728,88 740,100 760,108 785,120 805,140 822,175 840,220 850,255 860,285 872,315 875,400 880,480 886,560 895,610 902,660 908,695 920,715 957,729" c={G} w={3} />
      <L d="728,85 740,95 780,98 820,110 850,125 880,145 900,165 915,190 920,250 930,350 937,430 942,520 944,640 944,725" c={P} w={3} />
      <Dots d="733,728" c={B} r={3.4} /><Dots d="785,730 729,568" c={O} r={3.4} /><Dots d="843,730" c={G} r={3.4} /><Dots d="900,730 729,238" c={P} r={3.4} />
      <R x={735} y={452} x2={808} y2={712} c="#d8d8dc" fill="rgba(247,246,249,.8)" />
      {[[B, "0.00"], [O, "0.25"], [G, "0.50"], [P, "0.75"], ["#c3b0da", "1.00"]].map(([c, t], i) => <g key={t}><L d={`738,${480 + i * 50.3} 767,${480 + i * 50.3}`} c={c} w={4.4} /><T x={776} y={480 + i * 50.3} to={804} s={11} c="#444">{t}</T></g>)}
      <Axes box={[728, 72, 957, 732]} xt={[728, 957]} yt={[732, 73]} xl={Q5} xy={773} yx={719} s={12.4} c="#3c3c40" frame="#4a4a50" fw={1.8} />
      <T x={820} y={827} to={866} s={13.5} c="#3c3c40">Recall</T><T x={683} y={405} rot len={61} s={13} c="#3c3c40">Precision</T>
    </Figure>
  );
};
const NOTO = `"Noto Sans", sans-serif`;
const FigArea = () => (
  <Figure on={B7} x={2387} y={1350} w={463}>
    {spread(1075, 1383, 11).map((v, i) => <g key={i}><L d={`${v},199 ${v},668`} c="#e0e0e3" /><T x={v} y={710} s={9.6} c="#333" f={NOTO}>{TENTHS[i].replace(".", ",")}</T></g>)}
    {spread(668, 199, 11).map((v, i) => <g key={i}><L d={`1075,${v} 1383,${v}`} c={i ? "#e0e0e3" : "#c4c4c8"} /><T x={1065} y={v} s={9.6} a="end" c="#333" f={NOTO}>{TENTHS[i].replace(".", ",")}</T></g>)}
    <L d="1075,194 1100,196 1120,199 1145,205 1170,214 1190,224 1210,235 1230,249 1250,265 1270,284 1290,305 1308,327 1325,351 1338,372 1350,395 1360,418 1368,440 1374,462 1379,485 1382,507 1383,530" c="#2c2c30" w={1.8} />
    <Dots d="1075,199 1383,530" c="#e6301f" r={5.2} />
    <T x={1030} y={134} to={1130} s={14.5} c="#333" f={NOTO}>threshold ≈ 1</T>
    <T x={1397} y={558} to={1496} s={14.5} c="#333" f={NOTO}>threshold ≈ 0</T>
    <T x={1402} y={396} to={1521} s={9.2} c="#444" f={NOTO}>ratio of positive samples</T>
    <T x={1402} y={434} to={1481} s={9.2} c="#444" f={NOTO}>w.r.t all samples</T>
    <L d="1427,460 1391,510" c="#333" w={1.3} /><L d="1388,516 1392,497 1398,507 1388,516" c="#333" fill="#333" w={1} />
    <T x={1202} y={763} to={1241} s={13} c="#333" f={NOTO}>recall</T>
    <T x={1035} y={412} rot len={59} s={13} c="#333" f={NOTO}>precision</T>
  </Figure>
);

const ROWS = [
  [
    [384, FigRoc, "How to Use ROC Curves and Precision ...", "machinelearningmastery.com"],
    [384, FigPr, "ROC Curves and Precision-Recall Curves ...", "machinelearningmastery.com", true],
    [351, FigExamples, "Precision-recall curves – what are they …", "acutecaretesting.org"],
    [384, FigAverage, "Precision-Recall — scikit-learn 0.24.2 ...", "scikit-learn.org"],
    [477, FigTwoPanel, "a Example of Precision-Recall curve ...", "researchgate.net"],
    [346, FigFourPoints, "precision-recall plot – Classifier ...", "classeval.wordpress.com"],
    [312, FigConf, "PRECISION-RECALL CURVE · Issue…", "github.com"],
  ],
  [
    [354, FigSpike, "How to Use ROC Curves and Precision ...", "machinelearningmastery.com"],
    [387, FigYellowbrick, "Precision-Recall Curves — Yellowbrick ...", "scikit-yb.org"],
    [354, FigSurgeon, "Precision-Recall Curves ...", "signalsurgeon.com"],
    [350, FigOverflow, "precision-recall curve ...", "stackoverflow.com"],
    [302, FigIrregular, "Irregular Precision-Recall Curve - …", "datascience.stackexchange.com"],
    [540, FigConsensus, "precision-recall curve (consensus ...", "researchgate.net"],
    [351, FigTwoClass, "Precision-Recall — scikit-learn 0.24.2 ...", "scikit-learn.org"],
  ],
  [
    [332, FigParameterC, "Precision-recall curves – what are th…", "acutecaretesting.org"],
    [423, FigThreshold, "threshold in a Precision-Recall curve ...", "stackoverflow.com"],
    [246, FigMultiClass, "Precision-Recall — scikit-le…", "scikit-learn.org"],
    [353, FigR, "precision recall curve in R ...", "r-bloggers.com"],
    [540, FigGeeks, "Precision-Recall Curve | ML - GeeksforGeeks", "geeksforgeeks.org"],
    [283, FigDefinition, "Precision and Recall Definition …", "arxiv.org"],
    [463, FigArea, "Precision, Recall and Area Under Curve ...", "towardsdatascience.com"],
  ],
];

/* ---------- chip thumbnails, 76 x 76 ---------- */
const Mini = ({ children }) => <svg width="76" height="76" viewBox="0 0 76 76" fill="none">{children}</svg>;
const Ticks = ({ y = 68 }) => <g stroke="#b9b9be" strokeWidth="1.2"><path d={`M22 ${y}v3M32 ${y}v3M42 ${y}v3M52 ${y}v3`} /><path d={`M31 ${y + 5}h12`} /></g>;
const Frame = () => <path d="M5 12H62M5 66H62" stroke="#cfcfd4" strokeWidth="1" />;
const MINI = {
  roc: <Mini><rect width="76" height="76" fill="#c5c3c6" /><rect x="32" width="16" height="76" fill="#f4f3f6" /><path d="M16 7h16" stroke="#7ecb74" strokeWidth="2" /><path d="M48 7h8l6 3" stroke="#5350cf" strokeWidth="2" /><path d="M39 3v5M40 32v16" stroke="#555" strokeWidth="1.6" /><path d="M44 22v1M44 36v1M44 52v1M44 62v1" stroke="#888" /><path d="M8 70h60v6H8z" fill="#efeef1" /></Mini>,
  auc: <Mini><Frame /><path d="M5 60C7 30 12 20 20 17S40 13 66 12" stroke="#eda873" strokeWidth="1.6" /><path d="M8 64L68 16" stroke="#c3c4cb" strokeWidth="1.2" /><rect x="14" y="12" width="14" height="6" stroke="#ccc" /><Ticks /></Mini>,
  yolo: <Mini><path d="M16 8V68" stroke="#c9cbd2" /><path d="M24 6Q54 8 62 30T72 62" stroke="#8fa9c9" strokeWidth="1.4" /><path d="M28 4h24" stroke="#bbb" /><path d="M32 15V8" stroke="#eea83c" strokeWidth="2.4" /><path d="M24 17.500h18M24 21.500h18M23 40h36M44 57h14M44 61h14" stroke="#8087c9" strokeWidth="2" strokeDasharray="5 .8 4 .8" /><path d="M62 58h8" stroke="#eea83c" strokeWidth="3" /><Ticks y={70} /></Mini>,
  cross: <Mini><path d="M20 9h38" stroke="#bbb" strokeWidth="1.5" /><path d="M0 23Q30 30 76 46" stroke="#b5bbb8" strokeWidth="1.6" /><path d="M0 28Q34 34 76 54" stroke="#93a08f" strokeWidth="1.6" /><path d="M2 32Q34 36 76 52" stroke="#c6b9b4" strokeWidth="1.4" /><Ticks /></Mini>,
  v3: <Mini><path d="M10 10V68M10 68H62" stroke="#999" /><path d="M13 12C24 2 60 2 68 14L70 60C67 72 58 72 52 64L36 38L14 24Z" fill="#978c84" />{[0, 1, 2, 3, 4, 5, 6, 7, 8, 9, 10, 11].map((i) => <path key={i} d={`M${12 + i * 3} ${22 - i * 1.5}C${24 + i * 4} ${8 + i} ${46 + i * 2} ${28 + i * 2} ${54 + i * 1.200} ${68 - i * 2}`} stroke={["#4d9a57", "#b5483f", "#5d7fb0", "#c2a343", "#8d6aa8", "#e3ddd8"][i % 6]} strokeWidth="1.2" />)}<path d="M12 16V34" stroke="#b5483f" strokeWidth="2.400" /><path d="M14 36V66Q20 40 24 52" stroke="#7fb5ae" strokeWidth="1.2" /><Ticks y={70} /></Mini>,
  curves: <Mini><Frame /><path d="M8 66L10 42L16 24L24 16L66 15" stroke="#f0c6a6" strokeWidth="1.5" /><path d="M10 64L70 18" stroke="#c9ccd8" strokeWidth="1.2" /><Ticks y={70} /></Mini>,
  threshold: <Mini><path d="M14 8Q40 8 76 24" stroke="#d98aa4" strokeWidth="1.6" strokeDasharray="4 1" /><path d="M14 8L76 34" stroke="#8d82da" strokeWidth="1.6" /><path d="M50 54v16M56 57h14M56 63h12" stroke="#bbb" strokeWidth="1.4" /><path d="M51 57h2" stroke="#d66" strokeWidth="2" /><path d="M18 70h38M32 74h14" stroke="#aaa" strokeWidth="1.6" strokeDasharray="4 4" /></Mini>,
  logistic: <Mini><Frame /><path d="M8 14L10 19L18 20L26 22L34 24L44 27L52 29L60 33L65 40L69 48L73 62" stroke="#e2843a" strokeWidth="2.400" /><Ticks /></Mini>,
  average: <Mini><path d="M7 8V62H70" stroke="#aaa" /><path d="M11 12L13 34L16 18L18 36L28 26L38 34L52 40L62 43L76 50" stroke="#6f7283" strokeWidth="1.8" /><path d="M10 30L28 27L76 47" stroke="#dcb2b2" strokeWidth="1" /><Ticks y={66} /></Mini>,
  scikit: <Mini><path d="M18 8h40M18 11h40" stroke="#bbb" /><path d="M5 22L14 16L22 28L30 32L42 42L56 50L74 58" stroke="#a8aee6" strokeWidth="1.6" /><path d="M28 8L36 24L46 30L60 44L72 50" stroke="#c9cfdc" strokeWidth="1.2" /><path d="M4 50L10 36L12 20" stroke="#e3b9bd" strokeWidth="1.3" /><path d="M8 54H60" stroke="#c7d7b9" /><path d="M14 58h48M14 61h48M14 64h48M14 67h46M16 70h40" stroke="#b7b7bc" strokeWidth="1.5" /></Mini>,
  classifier: <Mini><path d="M34 6h12" stroke="#888" strokeWidth="1.5" /><path d="M5 50Q8 22 30 18Q50 16 62 11" stroke="#dfb3cb" strokeWidth="1.5" /><path d="M6 54Q20 46 30 32T62 14" stroke="#b9dbe8" strokeWidth="1.3" /><path d="M6 60Q20 50 44 46T76 26" stroke="#b0a9e6" strokeWidth="1.5" /><path d="M62 58h8v8h-8z" stroke="#bbb" /><Ticks /></Mini>,
  last: <Mini><path d="M14 10V66H60M14 10Q20 26 30 34L34 52" stroke="#85858a" strokeWidth="1.5" /><path d="M6 14v2M6 26v2M6 38v2M6 50v2" stroke="#999" /><Ticks /></Mini>,
};
const CHIPS = [["roc", 161, "roc"], ["roc auc", 198, "auc"], ["yolo", 168, "yolo"], ["cross validation", 277, "cross"], ["yolov3", 189, "v3"], ["roc curves", 228, "curves"], ["threshold", 218, "threshold"], ["logistic regression", 300, "logistic"], ["average precision", 293, "average"], ["scikit", 179, "scikit"], ["positive rate", 177, null], ["classifier", 214, "classifier"], ["", 160, "last"]];

/* ---------- icons ---------- */
const Close = () => <svg width="14" height="14" viewBox="0 0 14 14"><path d="M2 2L12 12M12 2L2 12" stroke="#3d4045" strokeWidth="2.3" /></svg>;
const Jupyter = () => <svg width="24" height="24" viewBox="0 0 24 24" fill="#e8833a"><path d="M1.500 9.500C3 3.500 7 .3 12 .3s9 3.200 10.500 9.200C20 6.300 16.500 4.800 12 4.800S4 6.300 1.500 9.500Z" /><path d="M1.500 14.500C3 20.500 7 23.700 12 23.700s9-3.200 10.500-9.200C20 17.700 16.500 19.200 12 19.200s-8-1.500-10.500-4.700Z" /></svg>;
const Learn = () => <svg width="24" height="24" viewBox="0 0 24 24"><rect width="24" height="24" fill="#fff" /><circle cx="16.500" cy="6" r="5.500" fill="#e79a4a" /><circle cx="4" cy="6" r="2.500" fill="#3f87b5" /><path d="M2 10l6 2 6-2 8-2-6 5-3 4H8l-1-4z" fill="#4c7f9c" /><path d="M8 17h8" stroke="#555" strokeWidth="1.500" /></svg>;
const Share = () => <svg width="24" height="26" viewBox="0 0 24 26"><circle cx="13" cy="8" r="8" fill="#1f7f80" /><circle cx="17" cy="14" r="7" fill="#37a0a5" /><circle cx="12" cy="20" r="5.500" fill="#4cb0b5" /><rect x="0" y="6" width="13" height="13" rx="1" fill="#0f6a70" /><text x="6.500" y="16.500" fontSize="11" fontWeight="700" textAnchor="middle" fill="#fff" fontFamily="Inter, sans-serif">S</text></svg>;
const AppsGrid = () => <svg width="21" height="20" viewBox="0 0 21 20">{["#dd4b3e", "#dd4b3e", "#dd4b3e", "#3c9d5b", "#4285f4", "#eaa12d", "#3c9d5b", "#eab72d", "#eab72d"].map((c, i) => <rect key={i} x={(i % 3) * 8} y={Math.floor(i / 3) * 7.5} width="5" height="5" fill={c} />)}</svg>;
const Astro = () => <svg width="24" height="25" viewBox="0 0 24 25"><rect width="24" height="25" rx="3" fill="#221e38" /><path d="M8 8l1.300 4.200L13 13.500l-3.700 1.300L8 19l-1.300-4.200L3 13.500l3.700-1.300z" fill="#efa63a" /><circle cx="14" cy="6" r="1.500" fill="#4aa0c8" /><circle cx="18" cy="18" r="1.500" fill="#c94054" /><circle cx="17" cy="11" r="1" fill="#86c9a0" /></svg>;
const Bee = () => <svg width="25" height="25" viewBox="0 0 25 25"><ellipse cx="13" cy="14" rx="9" ry="8" fill="#3a3226" /><path d="M3 16q5-7 11-3l-5 9q-6 0-6-6zM13 7q7 1 9 7l-5 2z" fill="#d2a542" /><path d="M2 3l5 4M7 1l2 5" stroke="#333" strokeWidth="1.800" /><path d="M10 20h12l2 4H12z" fill="#c59a3d" /></svg>;
const Folder = () => <svg width="26" height="21" viewBox="0 0 26 21"><path d="M1.500 19.500V3q0-1.500 1.500-1.500h6.500L12 4.500h11q1.500 0 1.500 1.500v13.500z" fill="#c9cacd" stroke="#606368" strokeWidth="2" /><path d="M1.500 8h23" stroke="#606368" strokeWidth="2" /></svg>;
const Reading = () => <svg width="22" height="22" viewBox="0 0 22 22" fill="none" stroke="#55585d" strokeWidth="2"><rect x="1.500" y="1.500" width="19" height="19" rx="1" /><path d="M5 6.500h2.500M10 6.500h7M5 11h2.500M10 11h7M5 15.500h2.500M10 15.500h7" /></svg>;

const STATUS = [
  [0, <svg width="26" height="26" viewBox="0 0 26 26"><path d="M8.500 6.500l4.500 2.500 4.500 10.500-4-1z" fill="#30383d" stroke="#30383d" strokeWidth="3" strokeLinejoin="round" /><circle cx="4.500" cy="18" r="2.800" fill="none" stroke="#dce9ef" strokeWidth="1.500" /><circle cx="21.500" cy="8" r="2.800" fill="none" stroke="#dce9ef" strokeWidth="1.500" /></svg>],
  [29, <FaDropbox size={28} />],
  [30, <svg width="26" height="26" viewBox="0 0 26 26"><circle cx="13" cy="13" r="12" fill="#fff" /><path d="M15 3.500L7.500 14.500h4.500L10.500 22.500 18.500 11.500H13.500z" fill="#6cb2cc" /></svg>],
  [32, <FaDocker size={27} />],
  [24.5, <svg width="26" height="26" viewBox="0 0 26 26" fill="#fff"><path d="M2 11a11 10.500 0 0122 0zM2 15a11 10.500 0 0022 0z" /></svg>],
  [32.5, <svg width="32" height="26" viewBox="0 0 32 26" fill="#fff"><path d="M16 1c7 0 8.500 5 9 11 .5 3 5.500 3.500 5.500 7.500 0 2-2 3-4 3H5.500c-2 0-4-1-4-3C1.500 15.500 6.500 15 7 12 7.500 6 9 1 16 1z" /><path d="M12 23h8q-1 3-4 3t-4-3z" /></svg>],
  [34, <FaGlobeAmericas size={24} />, 0.45],
  [22, <svg width="22" height="24" viewBox="0 0 22 24" fill="#fff"><path d="M1.500 2h9.500v8.500H5zM12.500 6l7.500-4v20H2V17q9.500.5 10.500-5z" /></svg>],
  [23, <svg width="22" height="24" viewBox="0 0 22 24" fill="#fff"><path d="M0 1h5.500v22H0zM7 1h6v22H7zM15 1h6.500v8.500H15zM15 13h6.500v10H15z" /></svg>],
  [26, <svg width="24" height="24" viewBox="0 0 24 24" fill="none" stroke="#fff" strokeWidth="2"><circle cx="12" cy="12" r="10" /><path d="M9.500 7.500L17 12l-7.500 4.500z" fill="#fff" stroke="none" /></svg>],
  [22, <FaBluetoothB size={22} />],
  [24, <svg width="38" height="22" viewBox="0 0 38 22" fill="none"><rect x="1.500" y="2" width="31" height="17" rx="4.500" stroke="#e6f3f8" strokeWidth="1.800" /><rect x="4" y="4.500" width="26" height="12" rx="2" fill="#fff" /><path d="M19.500 1L11 12h5l-2 8.500L23 9.500h-5z" fill="#fff" stroke="#6cb5d0" strokeWidth="1.600" /><path d="M34.500 7.500v6q2-1 2-3t-2-3z" fill="#e6f3f8" /></svg>, 0, 38],
  [26, <svg width="28" height="22" viewBox="0 0 28 22" fill="none" stroke="#fff" strokeWidth="3"><path d="M2.500 8Q14-2.500 25.500 8M7.500 13Q14 7 20.500 13" /><path d="M11 17q3-2.500 6 0l-3 3.500z" fill="#fff" stroke="none" /></svg>],
  [26, <svg width="24" height="24" viewBox="0 0 24 24" fill="none" stroke="#fff" strokeWidth="2.200"><circle cx="10" cy="9.500" r="7" /><path d="M15 15l7 7.500" /></svg>],
  [21, <svg width="24" height="24" viewBox="0 0 24 24"><rect x="1.500" y="1.500" width="20" height="8.500" rx="4.200" fill="none" stroke="#fff" strokeWidth="2" /><circle cx="16.500" cy="5.700" r="2.800" fill="#fff" /><rect x="1" y="13" width="21" height="10" rx="5" fill="#fff" /><circle cx="17" cy="18" r="3" fill="#6cb5d0" /></svg>],
];
const MENUS = [["Chrome", 107.5], ["File", 62.5], ["Edit", 66.6], ["View", 74.1], ["History", 96.7], ["Bookmarks", 131], ["Profiles", 100.6], ["Tab", 62], ["Window", 103], ["Help", 60]];
const BOOKMARKS = [
  ["Apps", 105.5, <AppsGrid />],
  ["Interpretable Mac...", 224, <FaGlobeAmericas size={23} color="#505256" />],
  ["Packt Publishing", 202.5, <Share />],
  ["InfluxDB 2.0", 164, <SiInfluxdb size={25} color="#7d8fee" />],
  ["Home | Dataiku", 189.5, <SquareIcon $bg="#f2c04c" $c="#2b2413" $f={21}>d</SquareIcon>],
  ["Astronomer", 165, <Astro />],
  ["JupyterLab", 156, <Jupyter />],
  ["Gatech Application", 221, <Bee />],
  ["Beautiful.ai", 156, <SquareIcon $bg="#3f86f2" $c="#fff" $f={18}>b.</SquareIcon>],
  ["Databricks", 151, <SiDatabricks size={25} color="#ea5c4f" />],
  ["FinTech GitHub", 188.5, <FaGithub size={24} color="#26292e" />],
  ["GitLab Pepperdine", 217.5, <FaGitlab size={24} color="#e8663a" />],
  ["Assessor Review...", 296.5, <svg width="22" height="22"><circle cx="11" cy="11" r="11" fill="#111" /></svg>],
];

export default function App() {
  return (
    <Screen>
      <Global />
      <Desktop>
        <MenuBar>
          <AppleSlot><FaApple size={25} /></AppleSlot>
          {MENUS.map(([t, w], i) => <MenuItem key={t} $w={w} $bold={i === 0}>{t}</MenuItem>)}
          <StatusArea>
            {STATUS.map(([m, icon, o, w], i) => <StatusIcon key={i} $m={m} $o={o} $w={w}>{icon}</StatusIcon>)}
            <Clock>Thu Jun 24  9:57 PM</Clock>
          </StatusArea>
        </MenuBar>
        <Window>
          <TabStrip>
            <Lights><Light $c="#ec6a5e" /><Light $c="#f4bd4f" /><Light $c="#61c354" /></Lights>
            <Tab $w={355} $pr={16}><TabIcon><Jupyter /></TabIcon><TabTitle>JupyterLab</TabTitle><Close /></Tab>
            <TabRule />
            <Tab $w={356} $pr={16} $pl={15}><TabIcon><SquareIcon $bg="transparent" $c="#3b94cf" $f={26} $wt={500}>k</SquareIcon></TabIcon><TabTitle>Employee Attrition | Kaggle</TabTitle><Close /></Tab>
            <TabRule />
            <Tab $w={357} $pr={16} $pl={17}><TabIcon><Learn /></TabIcon><TabTitle $ls={0.12} $fade={242}>3. Under-sampling — Version 0</TabTitle><Close /></Tab>
            <Tab $w={359} $pr={16} $pl={18} $active><TabIcon><FcGoogle size={21} /></TabIcon><TabTitle $fade={238}>recall precision curve - Google</TabTitle><Close /></Tab>
            <NewTab><svg width="20" height="20" viewBox="0 0 20 20"><path d="M10 1v18M1 10h18" stroke="#3d4045" strokeWidth="2.600" /></svg></NewTab>
            <TabMenu><svg width="22" height="22" viewBox="0 0 22 22"><circle cx="11" cy="11" r="11" fill="#3a3d42" /><path d="M6.500 8.500h9L11 14.500z" fill="#dfe0e6" /></svg></TabMenu>
          </TabStrip>
          <Toolbar>
            <NavButton><MdArrowBack size={28} /></NavButton>
            <NavButton $c="#b9bbbf"><MdArrowForward size={28} /></NavButton>
            <NavButton><MdRefresh size={29} /></NavButton>
            <UrlBar>
              <MdLock size={21} color="#606368" />
              <Url><b>google.com</b>/search?q=recall+precision+curve&tbm=isch&ved=2ahUKEwiiwfOw_7HxAhWQuZ4KHe6lAkQQ2-cCegQIABAA&oq=recall+precision+curve&gs_lcp=CgNpbWcQAzICCAAyBggAEAgQHjIGCAAQCBAeMgYIABAIEB4yBg...</Url>
              <MdStarBorder size={26} color="#606368" />
            </UrlBar>
            <Extensions>
              <Ext><svg width="25" height="28" viewBox="0 0 25 28"><circle cx="12.500" cy="14" r="12.500" fill="#4fba92" /><path d="M18 9.500A7 7 0 1019.500 14.500H14" fill="none" stroke="#fff" strokeWidth="2.200" /></svg></Ext>
              <Ext><svg width="26" height="22" viewBox="0 0 26 22" fill="none" stroke="#707378" strokeWidth="2.600"><path d="M2 2h22v7a11 11 0 01-22 0z" /><path d="M7.500 8.500L13 13.500l5.500-5" /></svg></Ext>
              <Ext><svg width="22" height="26" viewBox="0 0 22 26"><path d="M1 1h15l5 5v19H1z" fill="#d3d4d6" stroke="#8b8d91" strokeWidth="1.500" /><rect x="4" y="18" width="14" height="4" fill="#8f9195" /></svg></Ext>
              <Ext><svg width="24" height="24" viewBox="0 0 24 24"><circle cx="11" cy="13" r="8" fill="none" stroke="#d8294c" strokeWidth="3.200" /><circle cx="21" cy="4" r="2.300" fill="#d8294c" /></svg></Ext>
              <Ext><MdExtension size={26} color="#55585d" /></Ext>
              <Ext><Avatar $d={34} $f={19}>T</Avatar></Ext>
              <Ext><MdMoreVert size={27} color="#55585d" /></Ext>
            </Extensions>
          </Toolbar>
          <Bookmarks>
            {BOOKMARKS.map(([t, w, icon]) => <Bookmark key={t} $w={w}><BmIcon>{icon}</BmIcon>{t}</Bookmark>)}
            <Bookmark $w={29}><svg width="14" height="12" viewBox="0 0 14 12" fill="none" stroke="#44474c" strokeWidth="2"><path d="M1.500 1l5 5-5 5M7.500 1l5 5-5 5" /></svg></Bookmark>
            <BmRule />
            <Bookmark $w={215} $pl={15}><BmIcon><Folder /></BmIcon>Other Bookmarks</Bookmark>
            <BmRule />
            <Bookmark $w={160} $pl={14}><BmIcon><Reading /></BmIcon>Reading List</Bookmark>
          </Bookmarks>
          <Page>
            <SearchRow>
              <Logo width="142" height="60" viewBox="0 0 142 60">
                <text x="2" y="46" fontSize="50" fontFamily="Lato, sans-serif" fontWeight="400" textLength="137" lengthAdjust="spacingAndGlyphs" strokeWidth="1.400">
                  <tspan fill="#4a80ee" stroke="#4a80ee">G</tspan><tspan fill="#dd4b3e" stroke="#dd4b3e">o</tspan><tspan fill="#f2b92f" stroke="#f2b92f">o</tspan><tspan fill="#4a80ee" stroke="#4a80ee">g</tspan><tspan fill="#3c9f58" stroke="#3c9f58">l</tspan><tspan fill="#dd4b3e" stroke="#dd4b3e">e</tspan>
                </text>
              </Logo>
              <SearchBox>
                <Query>recall precision curve</Query>
                <SearchIcons>
                  <svg width="31" height="28" viewBox="0 0 31 28"><path d="M3 4h6l2-4h9l2 4h6q3 0 3 3v18q0 3-3 3H3q-3 0-3-3V7q0-3 3-3z" fill="#707377" /><circle cx="15.500" cy="15.500" r="6.500" fill="none" stroke="#fff" strokeWidth="2.600" /></svg>
                  <svg width="34" height="32" viewBox="0 0 34 32" fill="none"><rect x="12.500" y="1" width="9.500" height="19" rx="4.700" fill="#4a80ee" /><path d="M7.500 15q0 4 2.500 7" stroke="#eab12d" strokeWidth="3" /><path d="M10 21.500q3 3.500 7.200 3.500 9.800 0 9.800-10" stroke="#dd4b3e" strokeWidth="3" /><path d="M17.200 25v6" stroke="#3c9f58" strokeWidth="3.200" /></svg>
                  <svg width="27" height="27" viewBox="0 0 27 27" fill="none" stroke="#4a80ee" strokeWidth="3"><circle cx="10.500" cy="10.500" r="8.500" /><path d="M16.500 16.500l9 9" /></svg>
                </SearchIcons>
              </SearchBox>
              <Account>
                <svg width="24" height="24" viewBox="0 0 24 24" fill="#505358">{[0, 1, 2, 3, 4, 5, 6, 7, 8].map((i) => <circle key={i} cx={3 + (i % 3) * 9} cy={3 + Math.floor(i / 3) * 9} r="2.900" />)}</svg>
                <Avatar $d={48} $f={26}>T</Avatar>
              </Account>
            </SearchRow>
            <NavRow>
              <NavTab $w={89} $g={9}><svg width="22" height="22" viewBox="0 0 22 22" fill="none" stroke="#6d7075" strokeWidth="2.200"><circle cx="8.500" cy="8.500" r="6.500" /><path d="M13.500 13.500l7 7" /></svg>All</NavTab>
              <NavTab $w={129} $pl={17} $on><svg width="22" height="22" viewBox="0 0 22 22" fill="none" strokeWidth="2.200"><path d="M1.500 14V4q0-2.500 2.500-2.500h8" stroke="#dd5b3e" /><path d="M12 1.500h6q2.500 0 2.500 2.500v14" stroke="#4a80ee" /><path d="M1.500 13v5q0 2.500 2.500 2.500h14q2.500 0 2.500-2.500" stroke="#4a80ee" /><path d="M5 16l4-5 3 3 2-2 4 4z" fill="#3c9f58" /><circle cx="7" cy="6.500" r="1.600" fill="#eab12d" /></svg>Images</NavTab>
              <NavTab $w={117} $pl={20} $g={7.5}><svg width="22" height="22" viewBox="0 0 22 22" fill="none" stroke="#6d7075" strokeWidth="2.200"><rect x="1.500" y="2" width="19" height="18" rx="2" /><path d="M5 7.500h5M5 11h5M5 14.500h5" /><path d="M12 7h5v2.500h-5zM12 13h5" strokeWidth="1.800" /></svg>News</NavTab>
              <NavTab $w={147} $pl={17}><svg width="22" height="22" viewBox="0 0 22 22" fill="none" stroke="#6d7075" strokeWidth="2.200"><path d="M11 2h8q1.500 0 1.500 1.500V11L11 20.500 1.500 11.500z" /><circle cx="15.500" cy="7" r="1" /></svg>Shopping</NavTab>
              <NavTab $w={126} $pl={20}><svg width="22" height="22" viewBox="0 0 22 22" fill="none" stroke="#6d7075" strokeWidth="2.200"><rect x="1.500" y="1.500" width="19" height="19" rx="2" /><path d="M8.500 7l6 4-6 4z" fill="#6d7075" stroke="none" /></svg>Videos</NavTab>
              <NavTab $w={211} $pl={25} $g={9}><svg width="4" height="22" viewBox="0 0 4 22" fill="#6d7075"><circle cx="2" cy="4" r="1.800" /><circle cx="2" cy="10.500" r="1.800" /><circle cx="2" cy="17" r="1.800" /></svg>More</NavTab>
              <NavTab $w={107} $pl={0}>Settings</NavTab>
              <NavTab $w={60} $pl={0}>Tools</NavTab>
              <NavTools>
                <svg width="22" height="25" viewBox="0 0 22 25"><path d="M0 5h15v20l-7.500-4.500L0 25z" fill="#85888c" /><path d="M5 1.500h14.500V20" fill="none" stroke="#85888c" strokeWidth="2.400" /></svg>
                Collections
                <SafeSearch>SafeSearch<svg width="11" height="7" viewBox="0 0 11 7"><path d="M0 0h11L5.500 7z" fill="#5c5f64" /></svg></SafeSearch>
              </NavTools>
            </NavRow>
            <ChipRow>
              {CHIPS.map(([t, w, k]) => <Chip key={t} $w={w} $plain={!k}>{k && <ChipThumb $strong={k === "roc" || k === "logistic" || k === "v3" || k === "last"}>{MINI[k]}</ChipThumb>}{t}</Chip>)}
              <NextButton><svg width="22" height="30" viewBox="0 0 22 30"><path d="M3 2l13 13L3 28" fill="none" stroke="#111" strokeWidth="4" /></svg></NextButton>
            </ChipRow>
            {ROWS.map((row, i) => (
              <ResultRow key={i}>
                {row.map(([w, Fig, title, source, hover], j) => (
                  <Result key={j} $w={w}>
                    <Thumb $hover={hover}>
                      <Fig />
                      {hover && (
                        <Pointer width="28" height="30" viewBox="0 0 28 30">
                          <path d="M8 2q2-1.500 3.500 1l2.500 8q2-1 3.500.5 2-1 3.500 1 2.500-.5 3 2l.5 5q0 4-2.500 7H12q-3-5-6-8-3-3-1-4.500t5 1.500L6.500 4.500Q6.500 2.800 8 2z" fill="#fff" stroke="#222" strokeWidth="2" />
                          <path d="M14 18l1 6M18 17.500l.5 6.500M21.500 17.500v6" stroke="#333" strokeWidth="1.600" />
                        </Pointer>
                      )}
                    </Thumb>
                    <Title>{title}</Title>
                    <Source>{source}</Source>
                  </Result>
                ))}
              </ResultRow>
            ))}
          </Page>
        </Window>
      </Desktop>
    </Screen>
  );
}
